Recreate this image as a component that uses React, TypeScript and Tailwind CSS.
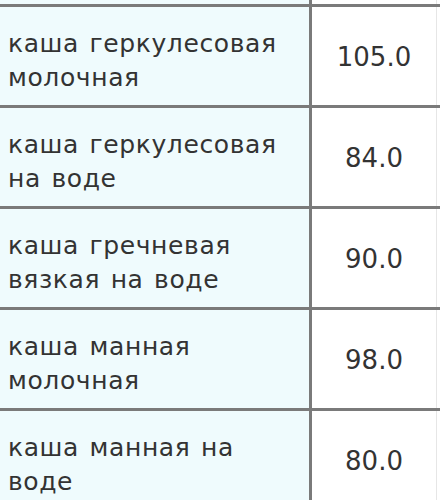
import React from 'react';

const rows = [
  { name: ['каша геркулесовая', 'молочная'], value: '105.0' },
  { name: ['каша геркулесовая', 'на воде'], value: '84.0' },
  { name: ['каша гречневая', 'вязкая на воде'], value: '90.0' },
  { name: ['каша манная', 'молочная'], value: '98.0' },
  { name: ['каша манная на', 'воде'], value: '80.0' },
];

export default function App() {
  return (
    <div
      className="w-[440px] h-[500px] overflow-hidden bg-white text-[#333333]"
      style={{ fontFamily: '"DejaVu Sans", Verdana, sans-serif' }}
    >
      {/* tail of the row above */}
      <div className="flex h-[4px]">
        <div className="w-[312px] bg-[#effbfd] border-r-[3px] border-[#7a7a7a]" />
        <div className="w-[125px] border-r border-[#e6e6e6]" />
      </div>
      {rows.map((r) => (
        <div key={r.value} className="flex h-[101px] border-t-[3px] border-[#7a7a7a]">
          <div className="w-[312px] bg-[#effbfd] border-r-[3px] border-[#7a7a7a] pl-[8px] flex flex-col justify-center pt-[10px]">
            {r.name.map((l) => (
              <div key={l} className="text-[25px] leading-[34px] tracking-[0.6px] [word-spacing:2px]">
                {l}
              </div>
            ))}
          </div>
          <div className="w-[125px] border-r border-[#e6e6e6] flex items-center justify-center pt-[2px] text-[26px]">
            {r.value}
          </div>
        </div>
      ))}
    </div>
  );
}
